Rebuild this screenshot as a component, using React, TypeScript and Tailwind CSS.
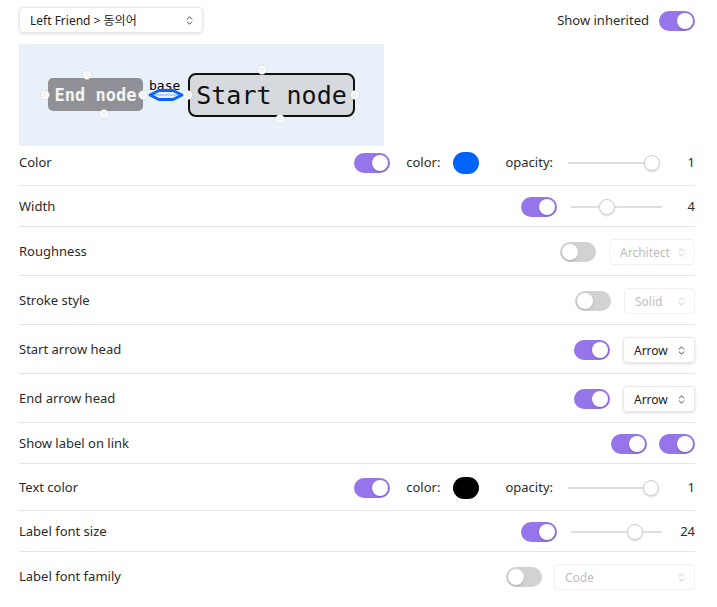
import React from 'react';
import { ChevronsUpDown } from 'lucide-react';

const font = { fontFamily: '"Segoe UI", "Noto Sans", "Noto Sans CJK KR", sans-serif' };

const Toggle = ({ on }: { on: boolean }) => (
  <div
    className={`w-9 h-5 rounded-full p-[2px] flex shrink-0 ${
      on ? 'bg-[#9674ea] justify-end' : 'bg-[#d2d2d2] justify-start'
    }`}
  >
    <div className="w-4 h-4 rounded-full bg-white shadow-[0_1px_2px_rgba(0,0,0,0.2)]" />
  </div>
);

const Select = ({
  value,
  className,
  disabled,
}: {
  value: string;
  className: string;
  disabled?: boolean;
}) => (
  <div
    className={`h-[26px] rounded-[4px] border flex items-center justify-between pl-[10px] pr-[7px] text-[12px] ${className} ${
      disabled
        ? 'border-[#f0f0f0] text-[#bdbdbd]'
        : 'border-[#e8e8e8] text-[#222] shadow-[0_1px_3px_rgba(0,0,0,0.14)]'
    }`}
  >
    <span className="pt-[1px]">{value}</span>
    <ChevronsUpDown size={11} strokeWidth={2} className={disabled ? 'text-[#c4c4c4]' : 'text-[#333]'} />
  </div>
);

const Slider = ({ pos, className }: { pos: number; className: string }) => (
  <div className={`relative h-4 flex items-center ${className}`}>
    <div className="w-full h-[2px] bg-[#dedede]" />
    <div
      className="absolute top-0 w-4 h-4 rounded-full bg-white border border-[#d0d0d0] shadow-[0_1px_2px_rgba(0,0,0,0.15)]"
      style={{ left: pos - 8 }}
    />
  </div>
);

const ColorControls = ({ swatch, pos }: { swatch: string; pos: number }) => (
  <div className="flex items-center">
    <Toggle on />
    <span className="ml-[16px]">color:</span>
    <div className={`ml-[13px] w-[26px] h-[22px] rounded-full ${swatch}`} />
    <span className="ml-[26px]">opacity:</span>
    <Slider pos={pos} className="ml-[15px] w-[90px]" />
    <span className="w-[37px] text-right">1</span>
  </div>
);

const SliderControls = ({ pos, value }: { pos: number; value: string }) => (
  <div className="flex items-center">
    <Toggle on />
    <Slider pos={pos} className="ml-[14px] w-[91px]" />
    <span className="w-[33px] text-right">{value}</span>
  </div>
);

const Row = ({
  label,
  h,
  children,
}: {
  label: string;
  h: string;
  children: React.ReactNode;
}) => (
  <div className={`flex items-center justify-between border-b border-[#e4e4e4] pt-[2px] ${h}`}>
    <span>{label}</span>
    {children}
  </div>
);

const Handle = ({ x, y }: { x: number; y: number }) => (
  <g>
    <circle cx={x} cy={y} r={4.5} fill="none" stroke="#c9c9c9" strokeWidth={0.6} />
    <circle cx={x} cy={y} r={3.3} fill="#eef2f6" stroke="white" strokeWidth={1.8} />
  </g>
);

const mono = { fontFamily: '"DejaVu Sans Mono", monospace' };

const Diagram = () => (
  <div className="relative w-[365px] h-[102px] bg-[#e8f1fa] mt-[11px]">
    {/* End node */}
    <div
      className="absolute left-[29px] top-[34px] w-[95px] h-[33px] pt-[2px] rounded-[5px] bg-[#8f9196] flex items-center justify-center text-[#f4f4f4] font-bold text-[17px]"
      style={mono}
    >
      End node
    </div>
    {/* Start node */}
    <div
      className="absolute left-[169px] top-[29px] w-[167px] h-[44px] pt-[2px] rounded-[8px] bg-[#d6dade] border-2 border-[#111] flex items-center justify-center text-[#111] text-[25px]"
      style={mono}
    >
      Start node
    </div>
    <span className="absolute left-[130px] top-[35px] text-[13px] leading-[14px] text-black" style={mono}>
      base
    </span>
    <svg className="absolute inset-0" width="365" height="102">
      <polygon
        points="131,51 140,46.5 154,46.5 163,51 154,55.5 140,55.5"
        fill="none"
        stroke="#0b63f6"
        strokeWidth={2.8}
        strokeLinejoin="round"
      />
      <line x1="134" y1="51" x2="160" y2="51" stroke="#0b63f6" strokeWidth={1} opacity={0.45} />
      <Handle x={68} y={31} />
      <Handle x={26} y={51} />
      <Handle x={85} y={70} />
      <Handle x={124} y={51} />
      <Handle x={243} y={26} />
      <Handle x={336} y={51} />
      <Handle x={261} y={75} />
      <Handle x={169} y={51} />
    </svg>
  </div>
);

export default function App() {
  return (
    <div className="w-[717px] h-[607px] bg-white pl-[19px] pr-[22px] pt-[7px] text-[13px] text-[#2b2b2b]" style={font}>
      {/* Top bar */}
      <div className="flex items-center justify-between h-[26px]">
        <Select value="Left Friend > 동의어" className="w-[184px]" />
        <div className="flex items-center pt-[2px]">
          <span>Show inherited</span>
          <div className="ml-[10px]">
            <Toggle on />
          </div>
        </div>
      </div>

      <Diagram />

      <div className="flex items-center justify-between border-b border-[#e4e4e4] h-[40px] pt-[1px] pb-[6px]">
        <span>Color</span>
        <ColorControls swatch="bg-[#0063f7]" pos={84} />
      </div>
      <Row label="Width" h="h-[41px]">
        <SliderControls pos={36} value="4" />
      </Row>
      <Row label="Roughness" h="h-[49px]">
        <div className="flex items-center gap-[13px]">
          <Toggle on={false} />
          <Select value="Architect" className="w-[86px]" disabled />
        </div>
      </Row>
      <Row label="Stroke style" h="h-[49px]">
        <div className="flex items-center gap-[13px]">
          <Toggle on={false} />
          <Select value="Solid" className="w-[71px]" disabled />
        </div>
      </Row>
      <Row label="Start arrow head" h="h-[49px]">
        <div className="flex items-center gap-[13px]">
          <Toggle on />
          <Select value="Arrow" className="w-[72px]" />
        </div>
      </Row>
      <Row label="End arrow head" h="h-[49px]">
        <div className="flex items-center gap-[13px]">
          <Toggle on />
          <Select value="Arrow" className="w-[72px]" />
        </div>
      </Row>
      <Row label="Show label on link" h="h-[41px]">
        <div className="flex items-center gap-[12px]">
          <Toggle on />
          <Toggle on />
        </div>
      </Row>
      <Row label="Text color" h="h-[47px]">
        <ColorControls swatch="bg-black" pos={83} />
      </Row>
      <Row label="Label font size" h="h-[41px]">
        <SliderControls pos={64} value="24" />
      </Row>
      <div className="flex items-center justify-between h-[48px] pt-[2px]">
        <span>Label font family</span>
        <div className="flex items-center gap-[12px]">
          <Toggle on={false} />
          <Select value="Code" className="w-[141px]" disabled />
        </div>
      </div>
    </div>
  );
}
